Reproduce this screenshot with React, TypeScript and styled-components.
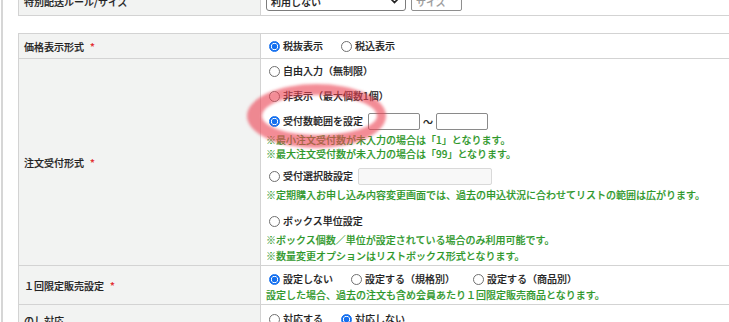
import React from 'react'
import styled, { createGlobalStyle } from 'styled-components'

const GlobalStyle = createGlobalStyle`
  html, body {
    margin: 0;
    padding: 0;
    background: #fff;
    overflow: hidden;
  }
  body {
    font-family: "Noto Sans CJK JP", "Noto Sans", sans-serif;
    font-size: 10px;
    font-weight: 500;
    color: #222;
    -webkit-text-stroke: 0.15px currentColor;
  }
`

const Frame = styled.div`
  margin-left: 1px;
  height: 322px;
  border-left: 2px solid #d6d6d6;
  padding-left: 15px;
  overflow: hidden;
`

const Canvas = styled.div`
  position: relative;
  margin-top: -14px;
  width: 760px;
`

const FormTable = styled.div<{ $gap?: number }>`
  border-left: 1px solid #d3d3d3;
  border-top: 1px solid #d3d3d3;
  margin-bottom: ${(p) => p.$gap ?? 0}px;
`

const Row = styled.div<{ $height?: number }>`
  display: grid;
  grid-template-columns: 242px 1fr;
  border-bottom: 1px solid #d3d3d3;
  min-height: ${(p) => (p.$height ? `${p.$height}px` : 'auto')};
`

const LabelCell = styled.div`
  display: flex;
  align-items: center;
  padding-left: 5px;
  background: #f2f3f2;
  border-right: 1px solid #d3d3d3;
  white-space: nowrap;
`

const Required = styled.span`
  color: #e3262b;
  margin-left: 6px;
  font-size: 10px;
`

const ValueCell = styled.div<{ $top?: number; $bottom?: number; $center?: boolean }>`
  display: flex;
  flex-direction: column;
  justify-content: ${(p) => (p.$center ? 'center' : 'flex-start')};
  padding: ${(p) => p.$top ?? 0}px 0 ${(p) => p.$bottom ?? 0}px 5px;
`

const Line = styled.div<{ $mt?: number }>`
  display: flex;
  align-items: center;
  height: 16px;
  margin-top: ${(p) => p.$mt ?? 0}px;
  white-space: nowrap;
`

const Option = styled.label<{ $gap?: number }>`
  display: inline-flex;
  align-items: center;
  margin-right: ${(p) => p.$gap ?? 15}px;
  line-height: 16px;
`

const Radio = styled.span<{ $checked?: boolean }>`
  box-sizing: border-box;
  width: 11px;
  height: 11px;
  border-radius: 50%;
  margin: 0 3px;
  flex: none;
  border: 1px solid ${(p) => (p.$checked ? '#1570ef' : '#6f6f6f')};
  background: ${(p) =>
    p.$checked
      ? 'radial-gradient(circle, #1570ef 0 2.6px, #ffffff 3.1px 3.3px, #1570ef 3.8px)'
      : '#ffffff'};
`

const NumberBox = styled.span<{ $width: number; $disabled?: boolean }>`
  box-sizing: border-box;
  display: inline-block;
  width: ${(p) => p.$width}px;
  height: 17px;
  border: 1px solid ${(p) => (p.$disabled ? '#d9d9d9' : '#8a8a8a')};
  border-radius: 2px;
  background: ${(p) => (p.$disabled ? '#f8f8f8' : '#fff')};
`

const Tilde = styled.span`
  margin: 0 3px;
`

const Note = styled.div<{ $mt?: number; $lh?: number }>`
  color: #2f982b;
  line-height: ${(p) => p.$lh ?? 16}px;
  margin-top: ${(p) => p.$mt ?? 0}px;
  white-space: nowrap;
`

const SelectBox = styled.span`
  box-sizing: border-box;
  display: inline-flex;
  align-items: center;
  justify-content: space-between;
  width: 140px;
  height: 20px;
  padding: 0 6px 0 4px;
  border: 1px solid #7c7c7c;
  border-radius: 3px;
  background: #fff;
`

const Chevron = styled.svg`
  width: 9px;
  height: 6px;
`

const TextBox = styled.span`
  box-sizing: border-box;
  display: inline-flex;
  align-items: center;
  width: 51px;
  height: 20px;
  margin-left: 5px;
  padding-left: 4px;
  border: 1px solid #8f8f8f;
  border-radius: 2px;
  color: #9a9a9a;
  box-shadow: inset 0 1px 1px rgba(0, 0, 0, 0.12);
`

// hand-drawn pink marker ring laid over the form
const Highlight = styled.div`
  position: absolute;
  left: 229px;
  top: 98px;
  width: 139px;
  height: 64px;
  box-sizing: border-box;
  border-radius: 50%;
  border-style: solid;
  border-color: rgba(236, 70, 86, 0.62);
  border-width: 11px 9px 13px 15px;
  filter: blur(1.6px);
  pointer-events: none;
`

const RadioOption = ({ label, checked }: { label: string; checked?: boolean }) => (
  <Option>
    <Radio $checked={checked} />
    {label}
  </Option>
)

export default function App() {
  return (
    <>
      <GlobalStyle />
      <Frame>
        <Canvas>
          <FormTable $gap={17}>
            <Row $height={28}>
              <LabelCell>特別配送ルール/サイズ</LabelCell>
              <ValueCell $center>
                <Line>
                  <SelectBox>
                    利用しない
                    <Chevron viewBox="0 0 9 6">
                      <path d="M1 1l3.5 3.5L8 1" fill="none" stroke="#222" strokeWidth="1.6" />
                    </Chevron>
                  </SelectBox>
                  <TextBox>サイズ</TextBox>
                </Line>
              </ValueCell>
            </Row>
          </FormTable>

          <FormTable>
            <Row $height={24}>
              <LabelCell>
                価格表示形式<Required>*</Required>
              </LabelCell>
              <ValueCell $center>
                <Line>
                  <RadioOption label="税抜表示" checked />
                  <RadioOption label="税込表示" />
                </Line>
              </ValueCell>
            </Row>

            <Row>
              <LabelCell>
                注文受付形式<Required>*</Required>
              </LabelCell>
              <ValueCell $top={4} $bottom={1}>
                <Line>
                  <RadioOption label="自由入力（無制限）" />
                </Line>
                <Line $mt={9}>
                  <RadioOption label="非表示（最大個数1個）" />
                </Line>
                <Line $mt={9}>
                  <Option $gap={5}>
                    <Radio $checked />
                    受付数範囲を設定
                  </Option>
                  <NumberBox $width={52} />
                  <Tilde>〜</Tilde>
                  <NumberBox $width={52} />
                </Line>
                <Note $mt={4} $lh={14}>
                  ※最小注文受付数が未入力の場合は「1」となります。
                  <br />
                  ※最大注文受付数が未入力の場合は「99」となります。
                </Note>
                <Line $mt={7}>
                  <Option $gap={5}>
                    <Radio />
                    受付選択肢設定
                  </Option>
                  <NumberBox $width={134} $disabled />
                </Line>
                <Note $mt={3}>※定期購入お申し込み内容変更画面では、過去の申込状況に合わせてリストの範囲は広がります。</Note>
                <Line $mt={10}>
                  <RadioOption label="ボックス単位設定" />
                </Line>
                <Note $mt={3}>※ボックス個数／単位が設定されている場合のみ利用可能です。</Note>
                <Note>※数量変更オプションはリストボックス形式となります。</Note>
              </ValueCell>
            </Row>

            <Row>
              <LabelCell>
                １回限定販売設定<Required>*</Required>
              </LabelCell>
              <ValueCell $top={5} $bottom={1}>
                <Line>
                  <RadioOption label="設定しない" checked />
                  <RadioOption label="設定する（規格別）" />
                  <RadioOption label="設定する（商品別）" />
                </Line>
                <Note>設定した場合、過去の注文も含め会員あたり１回限定販売商品となります。</Note>
              </ValueCell>
            </Row>

            <Row $height={30}>
              <LabelCell>のし対応</LabelCell>
              <ValueCell $top={6}>
                <Line>
                  <RadioOption label="対応する" />
                  <RadioOption label="対応しない" checked />
                </Line>
              </ValueCell>
            </Row>
          </FormTable>

          <Highlight />
        </Canvas>
      </Frame>
    </>
  )
}
